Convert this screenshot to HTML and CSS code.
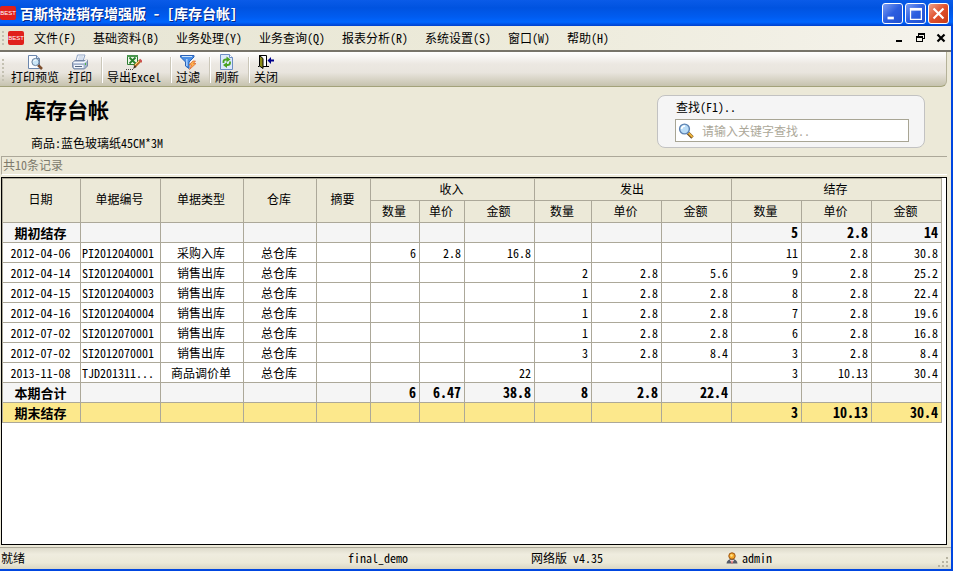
FILE: index.html
```html
<!DOCTYPE html>
<html lang="zh-CN">
<head>
<meta charset="utf-8">
<title>百斯特进销存增强版 - [库存台帐]</title>
<link rel="stylesheet" href="styles.css">
</head>
<body>
<div class="window">
  <header class="titlebar">
    <span class="logo">BEST</span>
    <h1 class="caption">百斯特进销存增强版 - [库存台帐]</h1>
    <div class="winbtns">
      <button class="winbtn" aria-label="最小化"><svg viewBox="0 0 21 21"><path d="M5 14h7v3H5z" fill="#fff"/></svg></button>
      <button class="winbtn" aria-label="最大化"><svg viewBox="0 0 21 21"><path d="M5 5h12v12H5z" fill="none" stroke="#fff" stroke-width="1.400"/><path d="M4.300 4.300h13.400v3H4.300z" fill="#fff"/></svg></button>
      <button class="winbtn close" aria-label="关闭窗口"><svg viewBox="0 0 21 21"><path d="M5 5l11 11M16 5L5 16" stroke="#fff" stroke-width="2.400"/></svg></button>
    </div>
  </header>

  <nav class="menubar">
    <span class="grip"></span>
    <span class="logo">BEST</span>
    <div class="menus">
      <button>文件(F)</button>
      <button>基础资料(B)</button>
      <button>业务处理(Y)</button>
      <button>业务查询(Q)</button>
      <button>报表分析(R)</button>
      <button>系统设置(S)</button>
      <button>窗口(W)</button>
      <button>帮助(H)</button>
    </div>
    <div class="mdi">
      <button aria-label="最小化子窗口"><svg viewBox="0 0 12 12"><path d="M3 8h6v2H3z"/></svg></button>
      <button aria-label="还原子窗口"><svg viewBox="0 0 12 12"><path d="M4 1h7v6H9V6h1V3H5v1H4z"/><path d="M2 4h7v6H2zM3 6v3h5V6z" fill-rule="evenodd"/></svg></button>
      <button aria-label="关闭子窗口"><svg viewBox="0 0 12 12"><path d="M2.500 2.500l7 7M9.500 2.500l-7 7" stroke="#000" stroke-width="2.200"/></svg></button>
    </div>
  </nav>

  <div class="toolbar">
    <span class="grip"></span>
    <button>
      <svg viewBox="0 0 16 16"><path d="M1.500 1.500h8l3 3v10h-11z" fill="#fafcff" stroke="#6c87ad"/><path d="M9.500 1.500v3h3" fill="#d4e1f2" stroke="#6c87ad"/><path d="M11 11l4 4" stroke="#7c4d2c" stroke-width="2.500"/><circle cx="8.500" cy="8" r="3.600" fill="#c9e6f8" stroke="#68809c"/><path d="M6.500 7.500q1-2 3-1.500" fill="none" stroke="#fff"/></svg>
      打印预览
    </button>
    <button>
      <svg viewBox="0 0 16 16"><path d="M5.500 1h7.500l-2 6H4z" fill="#fff" stroke="#8fa3c4"/><path d="M6.500 3h5M6 5h5" stroke="#a9bddb"/><path d="M.5 8.500L3 6.500h10l2.500-.5v6L12.500 15H2L.5 13z" fill="#a3b2cc" stroke="#66789a" stroke-width=".8"/><path d="M1.500 8.500h10.500l3-2.500" fill="none" stroke="#f3f7fd" stroke-width="1.500"/><path d="M2 11h9.500v3H2z" fill="#f1f6fd"/><path d="M3 12.500h7" stroke="#55657f"/><path d="M13.500 9v2" stroke="#51b947"/></svg>
      打印
    </button>
    <i class="sep"></i>
    <button>
      <svg viewBox="0 0 16 16"><path d="M1.500 1.500h10v9h-10z" fill="#eef6e9" stroke="#2e7d32"/><path d="M1 1h11v2H1z" fill="#4b9650"/><path d="M3.500 3.500l6 6M9.500 3.500l-6 6" stroke="#26812b" stroke-width="1.800"/><path d="M14.500 6.500L8.500 12.500" stroke="#b86e24" stroke-width="3"/><path d="M13.500 6.500L8.500 11.500" stroke="#ffd979"/><path d="M13.500 5.500L16 8" stroke="#cc4f4f" stroke-width="2"/><path d="M8.500 11l-1.500 4 3.500-2z" fill="#443322"/><path d="M0 15.500h7" stroke="#444" stroke-dasharray="1 1"/></svg>
      导出Excel
    </button>
    <i class="sep"></i>
    <button>
      <svg viewBox="0 0 16 16"><path d="M.5 1.500h13.500V3L9 8v6.500L5.500 12V8L.5 3z" fill="#4b8fe6" stroke="#2b62b6"/><path d="M2 2.500h10" stroke="#cce5ff"/><path d="M6.800 5v7" stroke="#a8d0ff" stroke-width="1.500"/><path d="M13 7l-4 4h2.500L9.500 15.500l6.500-6h-2.500L15.500 7z" fill="#ffb14d" stroke="#d9622b" stroke-width=".7"/></svg>
      过滤
    </button>
    <i class="sep"></i>
    <button>
      <svg viewBox="0 0 16 16"><path d="M1.500.5h9l3 3v12h-12z" fill="#dce9fc" stroke="#6d8ec4"/><path d="M10.500.5v3h3" fill="#fff" stroke="#6d8ec4"/><path d="M4.500 9V7.500q0-2 2.500-2h1" fill="none" stroke="#49a321" stroke-width="1.800"/><path d="M7.500 2.500l4 3-4 2.800z" fill="#49a321"/><path d="M11 7.500V9q0 2-2.500 2h-1" fill="none" stroke="#49a321" stroke-width="1.800"/><path d="M8 8.200L4 11l4 3z" fill="#49a321"/></svg>
      刷新
    </button>
    <i class="sep"></i>
    <button>
      <svg viewBox="0 0 16 16"><path d="M1.500 12V1.500h7V12" fill="#fff" stroke="#000"/><path d="M1.500 1.500l3.500 3v10L1.500 12z" fill="#8b8b16" stroke="#000"/><path d="M-1 12.500h2.500M5 12.500h6" stroke="#000"/><path d="M9.500 6.500l3.500-3.500v2.500h3v2h-3V10z" fill="#00008b"/></svg>
      关闭
    </button>
  </div>

  <main class="page">
    <section class="head">
      <div class="heading">
        <h2>库存台帐</h2>
        <p>商品:蓝色玻璃纸45CM*3M</p>
      </div>
      <div class="search">
        <label for="q">查找(F1)..</label>
        <div class="field">
          <svg viewBox="0 0 16 16"><path d="M10 10l4.500 4.500" stroke="#6b4a1d" stroke-width="3.400"/><path d="M10.500 10l4 4" stroke="#f0b63c" stroke-width="1.800"/><circle cx="6.500" cy="6" r="4.900" fill="#b9dcf7" stroke="#5d82b1" stroke-width="1.400"/><path d="M3.500 6q.5-3 3.500-3" fill="none" stroke="#fff" stroke-width="1.600"/></svg>
          <input id="q" type="text" placeholder="请输入关键字查找..">
        </div>
      </div>
    </section>

    <div class="count">共10条记录</div>

    <div class="gridbox">
      <table>
        <colgroup>
          <col class="c-date"><col class="c-no"><col class="c-type"><col class="c-store"><col class="c-note">
          <col class="c-inqty"><col class="c-inprice"><col class="c-amt">
          <col class="c-outqty"><col class="c-amt"><col class="c-amt">
          <col class="c-amt"><col class="c-amt"><col class="c-amt">
        </colgroup>
        <thead>
          <tr><th rowspan="2">日期</th><th rowspan="2">单据编号</th><th rowspan="2">单据类型</th><th rowspan="2">仓库</th><th rowspan="2">摘要</th><th colspan="3">收入</th><th colspan="3">发出</th><th colspan="3">结存</th></tr>
          <tr><th>数量</th><th>单价</th><th>金额</th><th>数量</th><th>单价</th><th>金额</th><th>数量</th><th>单价</th><th>金额</th></tr>
        </thead>
        <tbody>
          <tr class="sum"><td>期初结存</td><td></td><td></td><td></td><td></td><td></td><td></td><td></td><td></td><td></td><td></td><td>5</td><td>2.8</td><td>14</td></tr>
          <tr><td>2012-04-06</td><td>PI2012040001</td><td>采购入库</td><td>总仓库</td><td></td><td>6</td><td>2.8</td><td>16.8</td><td></td><td></td><td></td><td>11</td><td>2.8</td><td>30.8</td></tr>
          <tr><td>2012-04-14</td><td>SI2012040001</td><td>销售出库</td><td>总仓库</td><td></td><td></td><td></td><td></td><td>2</td><td>2.8</td><td>5.6</td><td>9</td><td>2.8</td><td>25.2</td></tr>
          <tr><td>2012-04-15</td><td>SI2012040003</td><td>销售出库</td><td>总仓库</td><td></td><td></td><td></td><td></td><td>1</td><td>2.8</td><td>2.8</td><td>8</td><td>2.8</td><td>22.4</td></tr>
          <tr><td>2012-04-16</td><td>SI2012040004</td><td>销售出库</td><td>总仓库</td><td></td><td></td><td></td><td></td><td>1</td><td>2.8</td><td>2.8</td><td>7</td><td>2.8</td><td>19.6</td></tr>
          <tr><td>2012-07-02</td><td>SI2012070001</td><td>销售出库</td><td>总仓库</td><td></td><td></td><td></td><td></td><td>1</td><td>2.8</td><td>2.8</td><td>6</td><td>2.8</td><td>16.8</td></tr>
          <tr><td>2012-07-02</td><td>SI2012070001</td><td>销售出库</td><td>总仓库</td><td></td><td></td><td></td><td></td><td>3</td><td>2.8</td><td>8.4</td><td>3</td><td>2.8</td><td>8.4</td></tr>
          <tr><td>2013-11-08</td><td>TJD201311...</td><td>商品调价单</td><td>总仓库</td><td></td><td></td><td></td><td>22</td><td></td><td></td><td></td><td>3</td><td>10.13</td><td>30.4</td></tr>
          <tr class="sum"><td>本期合计</td><td></td><td></td><td></td><td></td><td>6</td><td>6.47</td><td>38.8</td><td>8</td><td>2.8</td><td>22.4</td><td></td><td></td><td></td></tr>
          <tr class="sum final"><td>期末结存</td><td></td><td></td><td></td><td></td><td></td><td></td><td></td><td></td><td></td><td></td><td>3</td><td>10.13</td><td>30.4</td></tr>
        </tbody>
      </table>
    </div>
  </main>

  <footer class="status">
    <span>就绪</span>
    <span>final_demo</span>
    <span>网络版 v4.35</span>
    <span class="user">
      <svg viewBox="0 0 12 12"><path d="M.5 11.500Q1 7 6 7t5.500 4.500z" fill="#555a66"/><path d="M4 8l2 3.500L8 8z" fill="#fff"/><path d="M5.500 8.500h1v3h-1z" fill="#d33"/><circle cx="6" cy="4" r="3.200" fill="#f7a928" stroke="#9a5313"/><circle cx="5.500" cy="3.500" r="1.200" fill="#ffe38b"/></svg>
      admin
    </span>
    <svg class="resize" viewBox="0 0 12 12"><path d="M9 1h2v2H9zM5 5h2v2H5zM9 5h2v2H9zM1 9h2v2H1zM5 9h2v2H5zM9 9h2v2H9z" fill="#b8b4a2"/></svg>
  </footer>
</div>
</body>
</html>
```
FILE: styles.css
```css
* { box-sizing: border-box; }

body {
  margin: 0;
  font: 12px/16px "Noto Sans Mono CJK SC", "Liberation Mono", "Noto Sans CJK SC", monospace;
  color: #000;
  background: #ece9d8;
}

button {
  margin: 0;
  padding: 0;
  border: 0;
  background: none;
  font: inherit;
  color: inherit;
}

.window {
  display: flex;
  flex-direction: column;
  min-height: 100vh;
  border: solid #0046e0;
  border-width: 0 2px 2px 0;
}

/* Title bar */
.titlebar {
  display: flex;
  align-items: center;
  height: 26px;
  padding-right: 2px;
  margin-right: -2px;
  background: linear-gradient(#0a5be8, #0053e0 30%, #005cf0 65%, #0066ff 85%, #0040cc);
}

.logo {
  width: 16px;
  height: 14px;
  border-radius: 2px;
  background: #e0201b;
  color: #fff;
  font: 6px/14px "Liberation Sans", sans-serif;
  text-align: center;
}

.caption {
  flex: 1;
  margin: 0 0 0 4px;
  font-size: 14px;
  line-height: 24px;
  color: #fff;
  text-shadow: 1px 1px #0a2a86;
}

.winbtns { display: flex; gap: 2px; padding-right: 2px; }

.winbtn {
  width: 21px;
  height: 21px;
  border: 1px solid #fff;
  border-radius: 3px;
  background: linear-gradient(135deg, #7c9df2, #2c5ee0 50%, #2150d0);
}

.winbtn.close { background: linear-gradient(135deg, #f0a088, #e0502c 50%, #c83c18); }
.winbtn svg { display: block; width: 19px; height: 19px; }

/* Menu bar */
.menubar {
  display: flex;
  align-items: center;
  height: 26px;
  padding: 0 4px 0 2px;
  border-bottom: 2px solid #77746a;
  background: linear-gradient(90deg, #e7e5d5, #ecead9 50%, #f5f3ec);
}

.grip {
  align-self: stretch;
  width: 2px;
  margin: 5px 4px 4px 0;
  background: repeating-linear-gradient(#c4c1b2 0 2px, transparent 2px 4px);
}

.menus { display: flex; flex: 1; gap: 17px; padding-left: 10px; }
.mdi { display: flex; gap: 9px; }
.mdi svg { display: block; width: 12px; height: 12px; }

/* Toolbar */
.toolbar {
  display: flex;
  align-items: stretch;
  height: 35px;
  padding: 2px 2px 0;
  border-bottom: 1px solid #a3a27a;
  border-right: 1px solid #b5b299;
  border-radius: 0 0 6px 0;
  margin-right: 4px;
  background: linear-gradient(#fff, #ece8e2 35%, #e9e5de 60%, #c6c3ae);
}

.toolbar .grip { margin-right: 2px; }

.toolbar button {
  display: flex;
  flex-direction: column;
  align-items: center;
  padding: 0 5px;
  margin-right: -1px;
  line-height: 14px;
}

.toolbar button svg { width: 16px; height: 16px; flex: none; }
.sep { width: 1px; margin: 3px 0 3px 5px; background: #cbc7b9; box-shadow: 1px 0 #fff; }

/* Page heading and search */
.page { display: flex; flex-direction: column; flex: 1; padding-right: 4px; }

.head {
  display: flex;
  justify-content: space-between;
  align-items: flex-start;
  padding: 8px 22px 1px 25px;
}

.heading h2 {
  margin: 0;
  font-size: 21px;
  line-height: 28px;
}

.heading p { margin: 8px 0 0 6px; line-height: 24px; }

.search {
  display: flex;
  flex-direction: column;
  gap: 5px;
  width: 268px;
  padding: 4px 15px 5px 17px;
  border: 1px solid #c2c2c2;
  border-radius: 8px;
  background: #f5f5f5;
}

.search label { padding-left: 1px; line-height: 14px; }

.field {
  display: flex;
  align-items: center;
  height: 23px;
  padding: 0 2px;
  border: 1px solid #a8a594;
  background: #fff;
}

.field svg { width: 16px; height: 16px; flex: none; }

.field input {
  flex: 1;
  min-width: 0;
  padding: 0 0 0 8px;
  border: 0;
  outline: 0;
  font: inherit;
  background: none;
}

.field input::placeholder { color: #aca899; opacity: 1; }

.count {
  height: 19px;
  margin: 0 0 2px 1px;
  padding-left: 1px;
  border: solid #aca899;
  border-width: 1px 0 0 1px;
  border-bottom: 1px solid #fff;
  line-height: 16px;
  color: #7d7a6c;
}

/* Ledger grid */
.gridbox {
  flex: 1;
  margin: 0 0 2px 1px;
  padding-right: 4px;
  border: 1px solid #000;
  background: #fff;
}

table {
  width: 100%;
  table-layout: fixed;
  border-collapse: collapse;
}

.c-date { width: 78px; }
.c-no { width: 80px; }
.c-type { width: 83px; }
.c-store { width: 73px; }
.c-note { width: 54px; }
.c-inqty { width: 49px; }
.c-inprice { width: 45px; }
.c-outqty { width: 57px; }
.c-amt { width: 70px; }

th, td {
  height: 20px;
  padding: 0 3px;
  border: 1px solid #aca899;
  line-height: 19px;
  text-align: right;
  white-space: nowrap;
  overflow: hidden;
}

th {
  height: 22px;
  padding: 0 2px 2px 0;
  background: #ece9d8;
  font-weight: normal;
  text-align: center;
}

th[rowspan] { padding-bottom: 4px; }

td:nth-child(1), td:nth-child(3), td:nth-child(4) { padding: 0 2px 0 0; text-align: center; }
td:nth-child(2) { padding: 0 0 0 1px; text-align: left; }

.sum { background: #f5f5f5; font-size: 14px; font-weight: bold; }
.sum td:first-child { font-size: 13px; }
.final { background: #fce88c; }

/* Status bar */
.status {
  position: relative;
  display: grid;
  grid-template-columns: 347fr 183fr 195fr 225fr;
  align-items: center;
  height: 22px;
  padding: 0 0 2px 1px;
  border-top: 1px solid #aca899;
  background: linear-gradient(#dedbcb, #efecdf 30%, #ece9d8 70%, #d9d6c4);
}

.user { display: flex; align-items: center; gap: 4px; }
.user svg { width: 12px; height: 12px; }
.resize { position: absolute; right: 2px; bottom: 1px; width: 12px; height: 12px; }
```
